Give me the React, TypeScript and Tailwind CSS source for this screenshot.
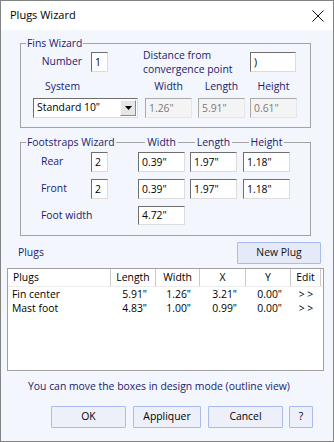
import React from "react";

const LBL = "text-[#1b1b70]";
const sunken =
  "h-[20px] bg-white border border-t-[#6e6e6e] border-l-[#6e6e6e] border-b-[#dcdcdc] border-r-[#dcdcdc] flex items-center px-[3px] text-black leading-none";
const disabled =
  "h-[20px] bg-[#f4f4f4] border border-t-[#a9a9a9] border-l-[#a9a9a9] border-b-[#e6e6e6] border-r-[#e6e6e6] flex items-center px-[3px] text-[#7a7a7a] leading-none";

const Line = ({ className = "" }: { className?: string }) => (
  <div className={`h-[7px] self-end border-t border-[#a3a3a3] ${className}`} />
);

const ColHead = ({ label, w }: { label: string; w: string }) => (
  <div className={`flex items-center ${w}`}>
    <Line className="flex-1" />
    <span className={`px-[2px] ${LBL} leading-[13px]`}>{label}</span>
    <Line className="flex-1" />
  </div>
);

const Btn = ({ label, w, ml }: { label: string; w: string; ml: string }) => (
  <div
    className={`${w} ${ml} h-[22px] border border-[#aabbef] bg-[#edf0f9] rounded-[1px] flex items-center justify-center text-black`}
  >
    {label}
  </div>
);

export default function App() {
  const rows = [
    ["Fin center", '5.91"', '1.26"', '3.21"', '0.00"'],
    ["Mast foot", '4.83"', '1.00"', '0.99"', '0.00"'],
  ];
  return (
    <div className="w-[334px] h-[442px] border border-[#838383] bg-[#f3f6fc] flex flex-col font-['Open_Sans','Noto_Sans',sans-serif] text-[10.4px] overflow-hidden">
      {/* Title bar */}
      <div className="h-[29px] bg-white flex items-center justify-between pl-[9px] pr-[9px] shrink-0">
        <span className="text-[11px] text-black">Plugs Wizard</span>
        <svg width="12" height="12" viewBox="0 0 12 12">
          <path d="M0.5 0.5 L11.5 11.5 M11.5 0.5 L0.5 11.5" stroke="#111" strokeWidth="1" />
        </svg>
      </div>

      {/* Fins Wizard group */}
      <div className="ml-[19px] w-[291px] mt-[7px] flex flex-col">
        <div className="h-[13px] flex items-center">
          <Line className="w-[6px] border-l" />
          <span className={`px-[1px] ${LBL} leading-[13px]`}>Fins Wizard</span>
          <Line className="flex-1 border-r" />
        </div>
        <div className="border-l border-r border-b border-[#a3a3a3] pt-[2px] pb-[9px] flex flex-col">
          <div className="h-[20px] flex items-center">
            <div className={`w-[70px] text-right pr-[9px] ${LBL}`}>Number</div>
            <div className={`${sunken} w-[17px]`}>1</div>
            <div className={`w-[142px] pl-[35px] ${LBL} leading-[14px]`}>
              Distance from
              <br />
              convergence point
            </div>
            <div className={`${sunken} w-[46px]`}>)</div>
          </div>
          <div className={`h-[14px] mt-[8px] flex items-center ${LBL}`}>
            <div className="ml-[12px] w-[105px] pl-[12px]">System</div>
            <div className="ml-[7px] w-[47px] text-center">Width</div>
            <div className="ml-[6px] w-[47px] text-center">Length</div>
            <div className="ml-[5px] w-[47px] text-center">Height</div>
          </div>
          <div className="h-[20px] mt-[4px] flex items-center">
            <div className="ml-[12px] w-[105px] h-[20px] bg-white border border-t-[#6e6e6e] border-l-[#6e6e6e] border-b-[#dcdcdc] border-r-[#dcdcdc] flex items-center justify-between pl-[3px] pr-[1px] text-black">
              <span>Standard 10"</span>
              <div className="w-[16px] h-[16px] bg-[#e6e6e6] border border-t-[#f8f8f8] border-l-[#f8f8f8] border-b-[#8a8a8a] border-r-[#8a8a8a] flex items-center justify-center">
                <svg width="7" height="4" viewBox="0 0 7 4">
                  <path d="M0 0 H7 L3.5 4 Z" fill="#000" />
                </svg>
              </div>
            </div>
            <div className={`${disabled} ml-[7px] w-[47px]`}>1.26"</div>
            <div className={`${disabled} ml-[6px] w-[47px]`}>5.91"</div>
            <div className={`${disabled} ml-[5px] w-[47px]`}>0.61"</div>
          </div>
        </div>
      </div>

      {/* Footstraps Wizard group */}
      <div className="ml-[19px] w-[291px] mt-[8px] flex flex-col">
        <div className="h-[13px] flex items-center">
          <div className="w-[118px] flex items-center h-[13px]">
            <Line className="w-[6px] border-l" />
            <span className={`px-[1px] ${LBL} leading-[13px] whitespace-nowrap`}>Footstraps Wizard</span>
            <Line className="flex-1" />
          </div>
          <ColHead label="Width" w="w-[47px]" />
          <Line className="w-[5px]" />
          <ColHead label="Length" w="w-[47px]" />
          <Line className="w-[6px]" />
          <ColHead label="Height" w="w-[47px]" />
          <Line className="flex-1 border-r" />
        </div>
        <div className="border-l border-r border-b border-[#a3a3a3] pt-[3px] pb-[10px] flex flex-col">
          {[
            ["Rear", "mt-0"],
            ["Front", "mt-[7px]"],
          ].map(([name, mt]) => (
            <div key={name} className={`h-[20px] ${mt} flex items-center`}>
              <div className={`w-[70px] pl-[20px] ${LBL}`}>{name}</div>
              <div className={`${sunken} w-[17px]`}>2</div>
              <div className={`${sunken} ml-[30px] w-[47px]`}>0.39"</div>
              <div className={`${sunken} ml-[5px] w-[47px]`}>1.97"</div>
              <div className={`${sunken} ml-[6px] w-[47px]`}>1.18"</div>
            </div>
          ))}
          <div className="h-[19px] mt-[7px] flex items-center">
            <div className={`w-[117px] pl-[20px] ${LBL}`}>Foot width</div>
            <div className={`${sunken} w-[47px] !h-[19px]`}>4.72"</div>
          </div>
        </div>
      </div>

      {/* Plugs header */}
      <div className="mt-[6px] h-[22px] flex items-center justify-between">
        <span className={`ml-[17px] ${LBL}`}>Plugs</span>
        <div className="mr-[12px] w-[84px] h-[22px] border border-[#a9bbef] bg-[#e5eaf8] rounded-[1px] flex items-center justify-center text-[#111]">
          New Plug
        </div>
      </div>

      {/* List view */}
      <div className="ml-[6px] mt-[4px] w-[317px] h-[103px] border border-[#a0a0a0] bg-white flex flex-col">
        <div className="h-[18px] flex items-stretch text-black border-b border-[#ececec]">
          <div className="w-[103px] border-r border-[#c9c9c9] pl-[5px] flex items-center">Plugs</div>
          <div className="w-[45px] border-r border-[#c9c9c9] flex items-center justify-center">Length</div>
          <div className="w-[44px] border-r border-[#c9c9c9] flex items-center justify-center">Width</div>
          <div className="w-[46px] border-r border-[#c9c9c9] flex items-center justify-center">X</div>
          <div className="w-[45px] border-r border-[#c9c9c9] flex items-center justify-center">Y</div>
          <div className="w-[30px] border-r border-[#c9c9c9] flex items-center justify-center">Edit</div>
        </div>
        <div className="pt-[1px] flex flex-col text-black">
          {rows.map((r) => (
            <div key={r[0]} className="h-[14px] flex items-center">
              <div className="w-[103px] pl-[4px]">{r[0]}</div>
              <div className="w-[45px] text-right pr-[9px]">{r[1]}</div>
              <div className="w-[44px] text-right pr-[9px]">{r[2]}</div>
              <div className="w-[46px] text-right pr-[9px]">{r[3]}</div>
              <div className="w-[45px] text-right pr-[9px]">{r[4]}</div>
              <div className="w-[30px] text-center">&gt; &gt;</div>
            </div>
          ))}
        </div>
      </div>

      {/* Footer note */}
      <div className={`mt-[9px] h-[14px] ml-[27px] flex items-center ${LBL}`}>
        You can move the boxes in design mode (outline view)
      </div>

      {/* Buttons */}
      <div className="mt-[12px] flex items-center">
        <Btn label="OK" w="w-[75px]" ml="ml-[50px]" />
        <Btn label="Appliquer" w="w-[68px]" ml="ml-[7px]" />
        <Btn label="Cancel" w="w-[75px]" ml="ml-[7px]" />
        <Btn label="?" w="w-[24px]" ml="ml-[6px]" />
      </div>
    </div>
  );
}
